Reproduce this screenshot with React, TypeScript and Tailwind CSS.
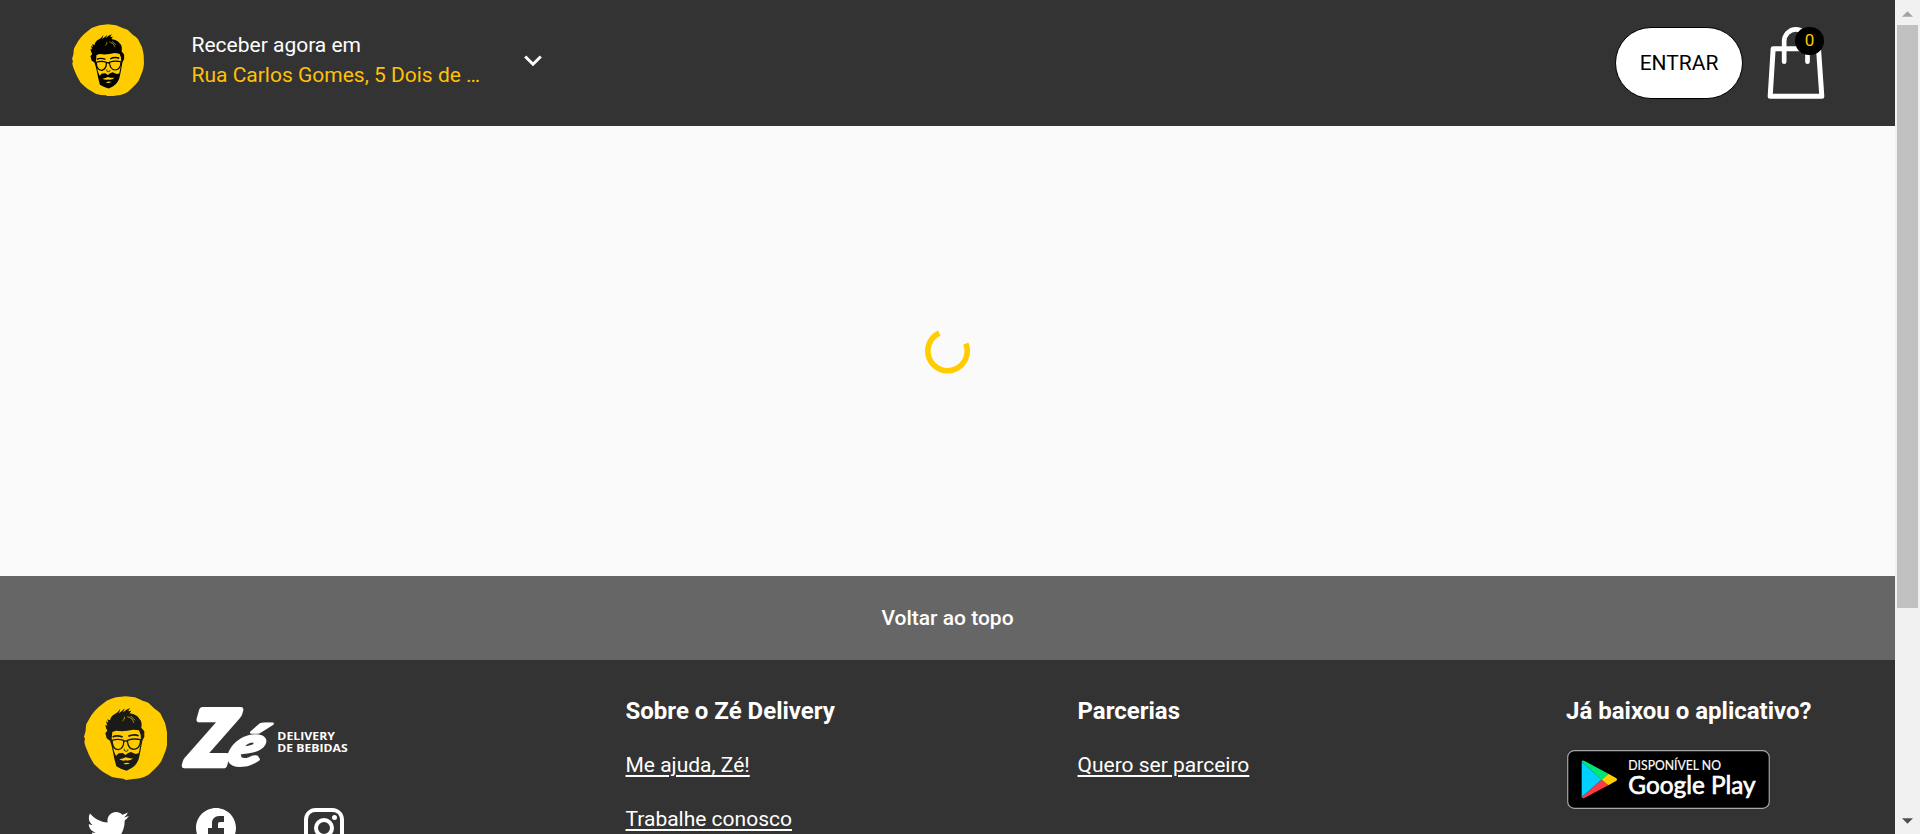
import React from "react";

function ZeFace({ className, ink }: { className: string; ink: string }) {
  return (
    <svg viewBox="0 0 250 252" className={className} aria-hidden="true">
      <path
        fill="#ffcc00"
        d="M125 1 L153 4 L178 15 Q186 17 194 21 L212 38 Q222 44 229 52 L243 80 Q247 94 249 108 L250 138 Q249 152 245 164 L232 196 Q224 208 213 218 L194 236 Q182 243 168 247 L143 250 L126 252 L118 248 Q100 247 84 243 L68 234 Q56 228 46 219 L30 204 Q21 190 14 175 L4 150 L1 138 L3 128 L0 122 L5 104 Q5 94 7 84 L22 58 Q32 44 44 33 L68 14 Q82 8 96 4 Z"
      />
      <path
        fill={ink}
        d="M64 86 L70 89 L66 76 L73 80 L70 70 L78 73 Q80 60 94 53 Q103 48 109 38 Q108 46 104 52 Q114 46 122 37 Q120 44 117 49 Q128 38 140 36 Q134 40 133 46 L142 44 L137 52 Q160 56 166 68 Q176 76 172 95 L181 106 L181 122 L175 134 L171 156 L167 177 Q164 194 158 202 Q152 212 143 216 L128 224 L112 219 L97 211 L91 188 L87 168 L83 150 L78 134 L68 127 L64 112 L70 104 L66 96 Z"
      />
      <path
        fill="#ffcc00"
        d="M85 108 L96 104 L113 106 L130 104 L148 101 L165 103 L170 116 L171 132 L168 154 L164 172 L155 174 L141 168 L132 171 L125 177 L116 171 L104 172 L96 180 L90 166 L87 150 L83 130 Z"
      />
      <path fill="none" stroke="#ffcc00" strokeWidth="2" d="M121 62 Q124 70 115 75 M130 62 Q146 65 149 80 M140 60 L153 73" />
      <g fill="none" stroke={ink}>
        <path strokeWidth="5" d="M86 123 Q98 116 116 123 M133 121 Q148 113 164 119" />
        <path strokeWidth="4" d="M84 133 Q102 127 119 133 Q121 157 103 161 Q86 161 84 133 Z M130 133 Q150 126 170 131 Q170 156 151 160 Q132 160 130 133 Z M119 137 Q124 132 130 137" />
        <path strokeWidth="2.5" d="M121 158 Q118 165 126 166 Q133 166 132 160" />
      </g>
      <path fill="#ffcc00" d="M106 190 Q116 188 125 184 Q136 188 148 187 Q137 196 126 193 Q115 196 106 190 Z M118 203 Q128 198 138 202 Q128 207 118 203 Z" />
    </svg>
  );
}

function Wordmark() {
  return (
    <svg viewBox="330 70 510 205" className="mt-[7px] ml-[13px] h-[68.3px] w-[170px] overflow-visible" fill="#fff">
      <g stroke="#fff" strokeLinejoin="round" fontFamily="Lato, sans-serif" fontWeight="900" fontStyle="italic">
        <text x="0" y="0" fontSize="226" strokeWidth="20" transform="translate(350 257) skewX(-9)">
          Z
        </text>
        <text x="0" y="0" fontSize="168" strokeWidth="9" transform="translate(465 257) skewX(-18) scale(1.24 1)">
          é
        </text>
      </g>
      <g fontFamily="'Open Sans', sans-serif" fontWeight="700" fontSize="31">
        <text x="622" y="182" textLength="173" lengthAdjust="spacingAndGlyphs">DELIVERY</text>
        <text x="622" y="217" textLength="211" lengthAdjust="spacingAndGlyphs">DE BEBIDAS</text>
      </g>
    </svg>
  );
}

const socialIcons = [
  "M22.46 6c-.77.35-1.6.58-2.46.69.88-.53 1.56-1.37 1.88-2.38-.83.5-1.75.85-2.72 1.05C18.37 4.5 17.26 4 16 4c-2.35 0-4.27 1.92-4.27 4.29 0 .34.04.67.11.98C8.28 9.09 5.11 7.38 3 4.79c-.37.63-.58 1.37-.58 2.15 0 1.49.75 2.81 1.91 3.56-.71 0-1.37-.2-1.95-.5v.03c0 2.08 1.48 3.82 3.44 4.21a4.22 4.22 0 0 1-1.93.07 4.28 4.28 0 0 0 4 2.98 8.521 8.521 0 0 1-5.33 1.84c-.34 0-.68-.02-1.02-.06C3.44 20.29 5.7 21 8.12 21 16 21 20.33 14.46 20.33 8.79c0-.19 0-.37-.01-.56.84-.6 1.56-1.36 2.14-2.23z",
  "M12 2C6.48 2 2 6.48 2 12c0 4.84 3.44 8.87 8 9.8V15H8v-3h2V9.5C10 7.57 11.57 6 13.5 6H16v3h-2c-.55 0-1 .45-1 1v2h3v3h-3v6.95c5.05-.5 9-4.76 9-9.95 0-5.52-4.48-10-10-10z",
  "M7.8 2h8.4C19.4 2 22 4.6 22 7.8v8.4a5.8 5.8 0 0 1-5.8 5.8H7.8C4.6 22 2 19.4 2 16.2V7.8A5.8 5.8 0 0 1 7.8 2m-.2 2A3.6 3.6 0 0 0 4 7.6v8.8C4 18.39 5.61 20 7.6 20h8.8a3.6 3.6 0 0 0 3.6-3.6V7.6C20 5.61 18.39 4 16.4 4H7.6m9.65 1.5a1.25 1.25 0 0 1 1.25 1.25A1.25 1.25 0 0 1 17.25 8 1.25 1.25 0 0 1 16 6.75a1.25 1.25 0 0 1 1.25-1.25M12 7a5 5 0 0 1 5 5 5 5 0 0 1-5 5 5 5 0 0 1-5-5 5 5 0 0 1 5-5m0 2a3 3 0 0 0-3 3 3 3 0 0 0 3 3 3 3 0 0 0 3-3 3 3 0 0 0-3-3z",
];

function Header() {
  return (
    <header className="flex h-[126px] shrink-0 items-start bg-[#333333] pl-[72px] pr-[68px] text-white">
      <ZeFace className="mt-[23.5px] h-[72.5px] w-[72px]" ink="#000" />
      <div className="ml-[47.5px] mt-[30px] w-[304px] text-[21px] leading-[30px]">
        <p>Receber agora em</p>
        <p className="text-[#ffc107]">Rua Carlos Gomes, 5 Dois de …</p>
      </div>
      <svg viewBox="0 0 18 12" className="ml-[28px] mt-[54.5px] h-3 w-[18px]" fill="none" stroke="#fff" strokeWidth="3">
        <path d="M1.2 1.5 9 9.2 16.8 1.5" />
      </svg>
      <button className="ml-auto mt-[27px] h-[72px] w-[128px] rounded-[36px] border border-black bg-white pt-[2px] text-[21px] text-black">
        ENTRAR
      </button>
      <div className="relative ml-[24px] mt-[25px] h-[76.7px] w-[60px]">
        <svg viewBox="561.5 75 180 230" className="h-full w-full" fill="none" stroke="#fff" strokeWidth="15" strokeLinecap="round" strokeLinejoin="round">
          <path d="M580 146H716L726 289H571Z" />
          <path strokeWidth="14" d="M613 185V124A35 36 0 0 1 683 124V185" />
        </svg>
        <span className="absolute left-[28px] top-[2px] flex h-[28px] w-[29px] items-center justify-center rounded-full bg-black text-[17px] text-[#ffcc00]">
          0
        </span>
      </div>
    </header>
  );
}

function PlayBadge() {
  return (
    <svg viewBox="80 210 610 178" className="mt-[23px] ml-[0.5px] h-[59.3px] w-[203.3px]">
      <rect x="82" y="212" width="605" height="173" rx="20" fill="#000" stroke="#a6a6a6" strokeWidth="3.5" />
      <path fill="#00d0ff" d="M124 245V352L184 299Z" />
      <path fill="#00e676" d="M124 245Q126 240 133 243L204 281 184 300Z" />
      <path fill="#ff3a44" d="M124 352Q127 357 133 353L204 316 184 299Z" />
      <path fill="#ffce00" d="M204 281 227 294Q233 298 227 303L204 316 184 299Z" />
      <g fill="#fff">
        <text x="264" y="269" fontSize="38" fontFamily="Lato, sans-serif" textLength="278" lengthAdjust="spacingAndGlyphs" stroke="#fff" strokeWidth="0.5">
          DISPONÍVEL NO
        </text>
        <text x="264" y="343" fontSize="75" fontFamily="Lato, sans-serif" textLength="382" lengthAdjust="spacingAndGlyphs" stroke="#fff" strokeWidth="2">
          Google Play
        </text>
      </g>
    </svg>
  );
}

const linkClass = "text-[21px] leading-[30px] underline decoration-2 underline-offset-[3px]";
const headingClass = "text-[24px] leading-[32px] font-bold";

function Footer() {
  return (
    <footer className="flex h-[174px] shrink-0 overflow-hidden bg-[#333333] text-white">
      <div className="w-[625.5px] shrink-0 pl-[84px] pt-[35.7px]">
        <div className="flex h-[84px] items-start">
          <ZeFace className="h-[84px] w-[83.3px]" ink="#1a1a18" />
          <Wordmark />
        </div>
        <div className="mt-[24.3px] flex gap-[60px]">
          {socialIcons.map((d) => (
            <svg key={d} viewBox="0 0 24 24" className="h-12 w-12" fill="#fff">
              <path d={d} />
            </svg>
          ))}
        </div>
      </div>
      <div className="w-[452px] shrink-0 pt-[35px]">
        <h2 className={headingClass}>Sobre o Zé Delivery</h2>
        <div className="mt-[23px] flex flex-col items-start gap-[24px]">
          <a className={linkClass}>Me ajuda, Zé!</a>
          <a className={linkClass}>Trabalhe conosco</a>
        </div>
      </div>
      <div className="w-[488.5px] shrink-0 pt-[35px]">
        <h2 className={headingClass}>Parcerias</h2>
        <div className="mt-[23px] flex">
          <a className={linkClass}>Quero ser parceiro</a>
        </div>
      </div>
      <div className="shrink-0 pt-[35px]">
        <h2 className={headingClass}>Já baixou o aplicativo?</h2>
        <PlayBadge />
      </div>
    </footer>
  );
}

function Scrollbar() {
  return (
    <div className="flex w-[25px] shrink-0 flex-col items-center bg-[#f1f1f1]">
      <div className="flex h-[25px] items-center">
        <svg viewBox="0 0 12 6" className="mt-[2px] h-[6px] w-[11px]" fill="#a3a3a3">
          <path d="M6 0 12 6H0Z" />
        </svg>
      </div>
      <div className="h-[583px] w-[21px] bg-[#c1c1c1]" />
      <div className="mt-auto flex h-[25px] items-center">
        <svg viewBox="0 0 12 6" className="mb-[2px] h-[6px] w-[11px]" fill="#505050">
          <path d="M0 0H12L6 6Z" />
        </svg>
      </div>
    </div>
  );
}

export default function App() {
  return (
    <div className="flex h-[834px] w-[1920px] overflow-hidden font-['Roboto',sans-serif]">
      <div className="flex w-[1895px] shrink-0 flex-col">
        <Header />
        <main className="flex h-[450px] shrink-0 items-center justify-center bg-[#fafafa]">
          <svg viewBox="-23.5 -24 48 48" className="h-12 w-12" fill="none" stroke="#ffcc00" strokeWidth="5.6">
            <path d="M-8.2 -17.9A19.7 19.7 0 1 0 18.3 -7.4" />
          </svg>
        </main>
        <button className="h-[84px] shrink-0 bg-[#666666] pt-[1px] text-[21px] font-medium text-white">Voltar ao topo</button>
        <Footer />
      </div>
      <Scrollbar />
    </div>
  );
}
